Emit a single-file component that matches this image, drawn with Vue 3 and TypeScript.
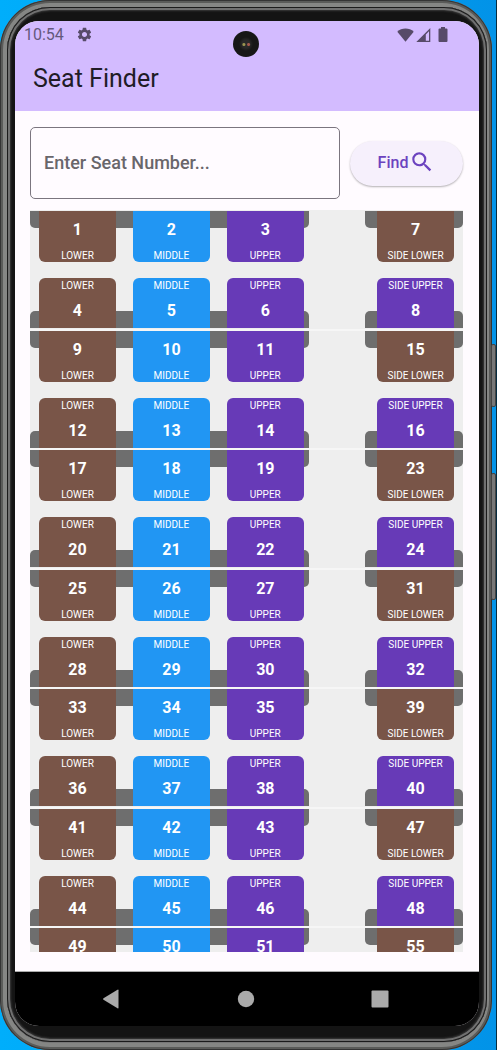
<script setup lang="ts">
import { ref } from 'vue'

type Kind = 'lower' | 'middle' | 'upper' | 'side-lower' | 'side-upper'

interface Seat {
  no: number
  kind: Kind
}

interface Row {
  facing: 'down' | 'up'
  main: Seat[]
  side: Seat
}

const BAY_COUNT = 7
const query = ref('')
const list = ref<HTMLElement | null>(null)

const mainKinds: Kind[] = ['lower', 'middle', 'upper']

function makeBay(index: number): Row[] {
  const base = index * 8
  return [
    {
      facing: 'down',
      main: mainKinds.map((kind, i) => ({ no: base + 1 + i, kind })),
      side: { no: base + 7, kind: 'side-lower' },
    },
    {
      facing: 'up',
      main: mainKinds.map((kind, i) => ({ no: base + 4 + i, kind })),
      side: { no: base + 8, kind: 'side-upper' },
    },
  ]
}

const bays: Row[][] = Array.from({ length: BAY_COUNT }, (_, i) => makeBay(i))

function label(kind: Kind): string {
  return kind.replace('-', ' ').toUpperCase()
}

function find(): void {
  const target = list.value?.querySelector(`[data-seat="${Number(query.value)}"]`)
  target?.scrollIntoView({ behavior: 'smooth', block: 'center' })
}
</script>

<template>
  <div class="desktop">
    <div class="phone">
      <div class="rim">
        <div class="screen">
          <header class="top">
            <div class="status">
              <span>10:54</span>
              <svg class="gear" viewBox="0 0 24 24" aria-hidden="true">
                <path d="M19.14 12.94c.04-.3.06-.61.06-.94 0-.32-.02-.64-.07-.94l2.03-1.58c.18-.14.23-.41.12-.61l-1.92-3.32c-.12-.22-.37-.29-.59-.22l-2.39.96c-.5-.38-1.03-.7-1.62-.94l-.36-2.54c-.04-.24-.24-.41-.48-.41h-3.84c-.24 0-.43.17-.47.41l-.36 2.54c-.59.24-1.13.57-1.62.94l-2.39-.96c-.22-.08-.47 0-.59.22L2.74 8.87c-.12.21-.08.47.12.61l2.03 1.58c-.05.3-.09.63-.09.94s.02.64.07.94l-2.03 1.58c-.18.14-.23.41-.12.61l1.92 3.32c.12.22.37.29.59.22l2.39-.96c.5.38 1.03.7 1.62.94l.36 2.54c.05.24.24.41.48.41h3.84c.24 0 .44-.17.47-.41l.36-2.54c.59-.24 1.13-.56 1.62-.94l2.39.96c.22.08.47 0 .59-.22l1.92-3.32c.12-.22.07-.47-.12-.61l-2.01-1.58zM12 15.6c-1.98 0-3.6-1.62-3.6-3.6s1.62-3.6 3.6-3.6 3.6 1.62 3.6 3.6-1.62 3.6-3.6 3.6z" />
              </svg>
              <div class="signals">
                <svg width="17" height="14" viewBox="0 0 17 14" aria-hidden="true">
                  <path d="M.3 3.8C2.4 1.8 5.3.6 8.5.6s6.1 1.2 8.200 3.200L8.500 13.800z" />
                </svg>
                <svg width="15" height="14" viewBox="0 0 15 14" aria-hidden="true">
                  <path fill-rule="evenodd" d="M14.300 0v14H.3zM13 3.300 9.800 6.500v6.200H13z" />
                </svg>
                <svg class="battery" width="10" height="15" viewBox="0 0 10 15" aria-hidden="true">
                  <path d="M3 0h4v1.500h1.500a1 1 0 0 1 1 1V14a1 1 0 0 1-1 1h-7a1 1 0 0 1-1-1V2.500a1 1 0 0 1 1-1H3z" />
                </svg>
              </div>
            </div>
            <h1>Seat Finder</h1>
          </header>

          <main class="content">
            <form class="search" @submit.prevent="find">
              <input v-model="query" type="text" aria-label="Seat number" placeholder="Enter Seat Number..." />
              <button type="submit">
                Find
                <svg viewBox="0 0 24 24" aria-hidden="true">
                  <path d="M15.500 14h-.79l-.28-.27A6.471 6.471 0 0 0 16 9.500 6.500 6.500 0 1 0 9.500 16c1.610 0 3.090-.59 4.230-1.570l.27.28v.79l5 4.990L20.490 19l-4.990-5zm-6 0C7.010 14 5 11.990 5 9.500S7.010 5 9.500 5 14 7.010 14 9.500 11.990 14 9.500 14z" />
                </svg>
              </button>
            </form>

            <div ref="list" class="list">
              <section v-for="(bay, b) in bays" :key="b" class="bay">
                <div v-for="row in bay" :key="row.facing" class="row" :class="row.facing">
                  <div class="berths main">
                    <div v-for="seat in row.main" :key="seat.no" class="seat" :class="seat.kind" :data-seat="seat.no">
                      <strong>{{ seat.no }}</strong>
                      <small>{{ label(seat.kind) }}</small>
                    </div>
                  </div>
                  <div class="berths side">
                    <div class="seat" :class="row.side.kind" :data-seat="row.side.no">
                      <strong>{{ row.side.no }}</strong>
                      <small>{{ label(row.side.kind) }}</small>
                    </div>
                  </div>
                </div>
              </section>
            </div>
          </main>

          <nav class="nav" aria-label="System">
            <button type="button" aria-label="Back">
              <svg viewBox="0 0 20 20"><path d="M17.500 1.200v17.600q0 1-1 .5L2.500 10.700q-1-.7 0-1.400L16.500.7q1-.5 1 .5z" /></svg>
            </button>
            <button type="button" aria-label="Home">
              <svg viewBox="0 0 20 20"><circle cx="10" cy="10" r="8.200" /></svg>
            </button>
            <button type="button" aria-label="Overview">
              <svg viewBox="0 0 20 20"><rect x="1.500" y="1.500" width="17" height="17" rx="1" /></svg>
            </button>
          </nav>
        </div>
      </div>
      <i class="camera"></i>
      <i class="key power"></i>
      <i class="key volume"></i>
    </div>
  </div>
</template>

<style>
body {
  margin: 0;
  overflow: hidden;
}
</style>

<style scoped>
* {
  box-sizing: border-box;
}

.desktop {
  height: 100vh;
  padding-right: 4px;
  border-right: 1px solid #062c40;
  background: linear-gradient(90deg, #00aefb, #0293e8);
  font-family: Roboto, "Liberation Sans", sans-serif;
  overflow: hidden;
}

.phone {
  position: relative;
  height: 100%;
  padding: 7px 5px 8px 7px;
  border-radius: 50px;
  background: #777;
  box-shadow:
    inset 0 0 0 1px #343434,
    inset 0 0 0 3px #5a5b59,
    inset 0 0 0 7px #858684;
}

.rim {
  height: 100%;
  padding: 14px 8px 16px 8px;
  border-radius: 43px;
  background: #141414;
  box-shadow:
    inset 0 0 0 1px #1b1b1b,
    inset 0 0 0 3px #707070,
    inset 0 0 2px 4px #3a3a3a;
}

.screen {
  display: flex;
  flex-direction: column;
  height: 100%;
  border-radius: 24px;
  background: #fffbff;
  overflow: hidden;
}

.top {
  flex: none;
  height: 90px;
  background: #d3bbff;
}

.status {
  display: flex;
  align-items: center;
  height: 27px;
  padding: 0 31px 0 9px;
  color: #64587c;
  font-size: 16px;
}

.status svg {
  fill: #574b69;
}

.gear {
  width: 17px;
  height: 17px;
  margin-left: 12px;
}

.signals {
  display: flex;
  align-items: center;
  gap: 2px;
  margin-left: auto;
}

.battery {
  margin-left: 5px;
}

h1 {
  margin: 0;
  padding-left: 18px;
  color: #211c26;
  font-size: 25px;
  font-weight: 400;
  line-height: 62px;
}

.content {
  display: flex;
  flex: 1;
  flex-direction: column;
  min-height: 0;
  padding: 16px 16px 19px 15px;
}

.search {
  display: flex;
  align-items: center;
  gap: 10px;
  flex: none;
  margin-bottom: 11px;
}

input {
  flex: 1;
  min-width: 0;
  height: 72px;
  padding: 0 13px 2px;
  border: 1px solid #7b757f;
  border-radius: 5px;
  background: transparent;
  color: #1d1b1e;
  font: 500 18px Roboto, "Liberation Sans", sans-serif;
}

input::placeholder {
  color: #69666b;
  opacity: 1;
}

.search button {
  display: flex;
  align-items: center;
  justify-content: center;
  gap: 1px;
  width: 113px;
  height: 45px;
  padding: 0 0 2px;
  border: 0;
  border-radius: 23px;
  background: #f6f0fc;
  box-shadow: 0 1px 2px #0000004d;
  color: #6c43bf;
  font: 500 16px Roboto, "Liberation Sans", sans-serif;
}

.search button svg {
  width: 26px;
  height: 26px;
  fill: #6c43bf;
}

.list {
  flex: 1;
  min-height: 0;
  padding-top: 1px;
  background: #eee;
  overflow-y: auto;
  scrollbar-width: none;
}

.bay {
  padding-bottom: 3px;
  background: linear-gradient(#f6f6f6, #f6f6f6) bottom / 100% 2px no-repeat;
}

.bay:nth-child(even) {
  padding-bottom: 2px;
}

.row {
  display: grid;
  grid-template-columns: 279fr 98fr;
  column-gap: 13%;
}

.row.down {
  padding-bottom: 16px;
}

.berths {
  position: relative;
  display: flex;
  gap: 17px;
}

.berths::before {
  position: absolute;
  top: 0;
  right: 0;
  left: 0;
  height: 17px;
  border-radius: 0 0 5px 5px;
  background: #6e6e6e;
  content: "";
}

.up .berths::before {
  top: auto;
  bottom: 0;
  border-radius: 5px 5px 0 0;
}

.main {
  padding: 0 5px 0 9px;
}

.side {
  padding: 0 9px 0 12px;
}

.seat {
  position: relative;
  display: flex;
  flex: 1;
  flex-direction: column;
  align-items: center;
  justify-content: space-between;
  height: 51px;
  padding: 9px 0 0;
  border-radius: 0 0 6px 6px;
  color: #fff;
}

.up .seat {
  flex-direction: column-reverse;
  height: 50px;
  padding: 2px 0 7px;
  border-radius: 6px 6px 0 0;
}

strong {
  font-size: 16px;
  font-weight: 700;
  line-height: 20px;
}

small {
  font-size: 10px;
  line-height: 12px;
  white-space: nowrap;
}

.lower,
.side-lower {
  background: #795548;
}

.middle {
  background: #2196f3;
}

.upper,
.side-upper {
  background: #673ab7;
}

.nav {
  display: flex;
  flex: none;
  align-items: center;
  justify-content: space-between;
  height: 55px;
  padding: 0 89px 0 86px;
  border-top: 1px solid #aaa;
  background: #000;
}

.nav button {
  display: flex;
  padding: 0;
  border: 0;
  background: none;
}

.nav svg {
  width: 20px;
  height: 20px;
  fill: #aaa;
}

.camera {
  position: absolute;
  top: 31px;
  left: 50%;
  width: 26px;
  height: 26px;
  border-radius: 50%;
  background:
    radial-gradient(circle at 42% 52%, #9a9550 0 1px, transparent 2px),
    radial-gradient(circle at 60% 52%, #a4584d 0 1px, transparent 2px),
    radial-gradient(circle, #292929 0 4px, #171717 7px);
  transform: translateX(-50%);
}

.key {
  position: absolute;
  right: -4px;
  width: 5px;
  border: 1px solid #444;
  border-radius: 2px;
  background: #777;
}

.power {
  top: 344px;
  height: 63px;
}

.volume {
  top: 473px;
  height: 127px;
}
</style>
